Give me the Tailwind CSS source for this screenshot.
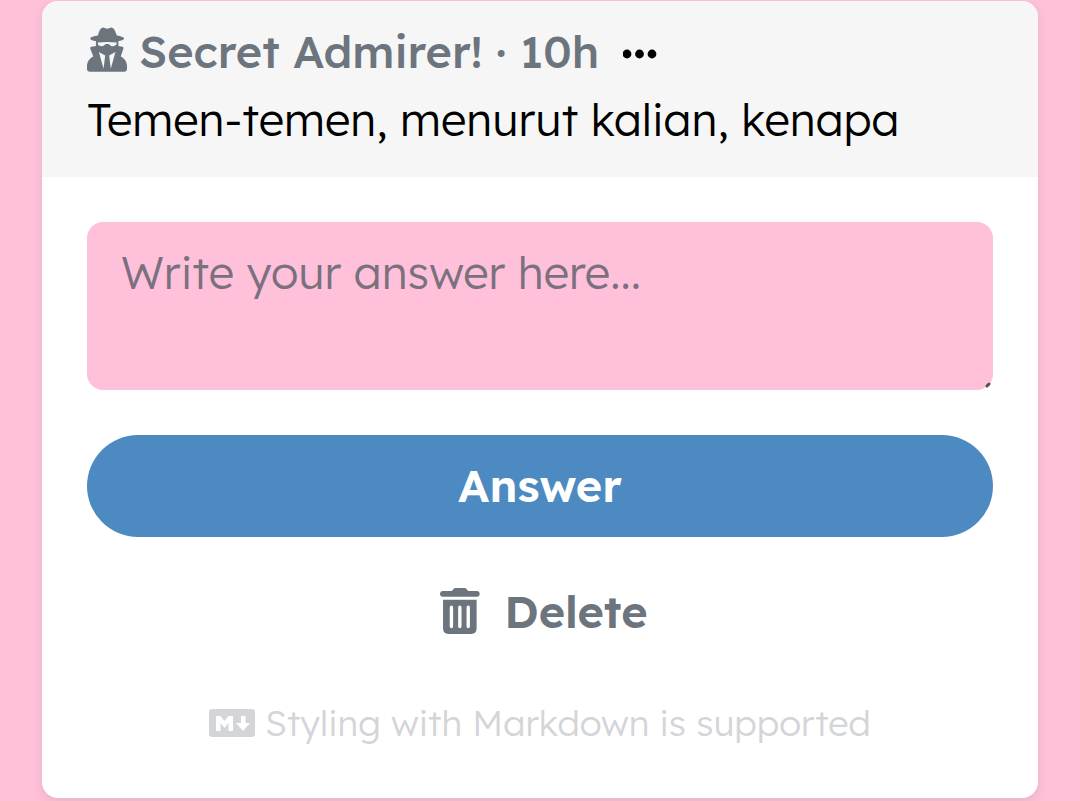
<!DOCTYPE html>
<html lang="id">
<head>
    <meta charset="UTF-8">
    <meta name="viewport" content="width=device-width, initial-scale=1.0">
    <title>Secret Admirer</title>
    <script src="https://cdn.jsdelivr.net/npm/@tailwindcss/browser@4"></script>
</head>
<body class="min-h-screen bg-[#fec1d9] px-[42px] pt-px pb-0.5 font-['Lexend','Inter',sans-serif] text-black">

    <main class="overflow-hidden rounded-2xl bg-white shadow-[0_4px_12px_rgba(0,0,0,0.08)]">

        <!-- Question -->
        <header class="bg-[#f6f6f6] px-[45px] pt-4 pb-6">
            <div class="flex items-center text-[45px] leading-[68px] font-medium text-[#6c757d]">
                <svg class="mr-3 mb-1 h-[45px] w-10 shrink-0" viewBox="50 52 121 135" fill="currentColor" aria-hidden="true">
                    <path d="M83 77 C87 62 92 53 99 53 C104 53 106 57 111 57 C116 57 118 53 124 53 C131 53 136 64 140 77 C153 79 162 82 162 86 C162 91 152 93 145 94 L145 109 L157 111 Q162 112 160 117 L152 141 C164 147 171 158 171 170 L171 178 Q171 187 162 187 L59 187 Q50 187 50 178 L50 170 C50 158 57 147 69 141 L60 117 Q58 112 63 111 L77 109 L77 94 C69 93 60 91 60 86 C60 82 69 79 83 77 Z"/>
                    <path fill="#f6f6f6" d="M83 98 Q111 96 140 98 L139 104 Q133 111 123 109 L115 103 L107 103 L99 109 Q88 111 83 104 Z M86 127 L105 138 L100 178 Z M136 127 L117 138 L122 178 Z"/>
                </svg>
                <h1>Secret Admirer! · 10h</h1>
                <button type="button" aria-label="More" class="mt-1.5 ml-6">
                    <svg class="h-3 w-[34px]" viewBox="0 0 34 12" fill="black"><circle cx="4" cy="6" r="4.4"/><circle cx="16.500" cy="6" r="4.4"/><circle cx="29" cy="6" r="4.4"/></svg>
                </button>
            </div>
            <p class="text-[45px] leading-[68px] font-light">Temen-temen, menurut kalian, kenapa</p>
        </header>

        <!-- Answer form -->
        <form class="flex flex-col px-[45px] py-[45px]">
            <div class="relative flex">
                <textarea aria-label="Answer" placeholder="Write your answer here..." class="h-[168px] w-full resize-none rounded-2xl bg-[#fec1d9] px-[34px] py-4 text-[45px] leading-[68px] font-light placeholder:text-[#7a7080]"></textarea>
                <svg class="absolute right-0.5 bottom-0.5 size-1.5" viewBox="0 0 6 6" stroke="#5a4a55" stroke-width="3" stroke-linecap="round"><path d="M2 4 4 2"/></svg>
            </div>
            <button type="submit" class="mt-[45px] h-[102px] rounded-full bg-[#4e8ac2] text-[45px] font-semibold text-white">Answer</button>
            <button type="button" class="mt-6 flex h-[102px] items-center justify-center gap-6 pl-2 text-[45px] font-semibold text-[#6c757d]">
                <svg class="mb-0.5 h-[46px] w-10" viewBox="35 37 119 137" fill="currentColor" aria-hidden="true">
                    <path d="M44 46 L70 46 L76 39 Q78 37 81 37 L108 37 Q111 37 113 39 L119 46 L145 46 Q153 46 153 55 Q153 63 145 63 L44 63 Q35 63 35 55 Q35 46 44 46 Z"/>
                    <path fill-rule="evenodd" d="M44 72 L144 72 L144 157 Q144 174 128 174 L60 174 Q44 174 44 157 Z M64 94 V152 Q64 157 69 157 T74 152 V94 Q74 89 69 89 T64 94 Z M89 94 V152 Q89 157 94 157 T99 152 V94 Q99 89 94 89 T89 94 Z M114 94 V152 Q114 157 119 157 T124 152 V94 Q124 89 119 89 T114 94 Z"/>
                </svg>
                Delete
            </button>
            <p class="mt-[30px] flex items-center justify-center gap-2.5 text-[36px] leading-[60px] font-light text-[#d3d5d8]">
                <svg class="h-7 w-[46px] shrink-0" viewBox="0 0 46 28" aria-hidden="true">
                    <rect width="46" height="28" rx="3" fill="currentColor"/>
                    <path fill="white" d="M7 22 V7 H11.500 L15.500 12 L19.500 7 H24 V22 H19.500 V14 L15.500 19 L11.500 14 V22 Z M32 7 H36.500 V14 H41 L34 22 L27 14 H32 Z"/>
                </svg>
                Styling with Markdown is supported
            </p>
        </form>
    </main>

</body>
</html>
